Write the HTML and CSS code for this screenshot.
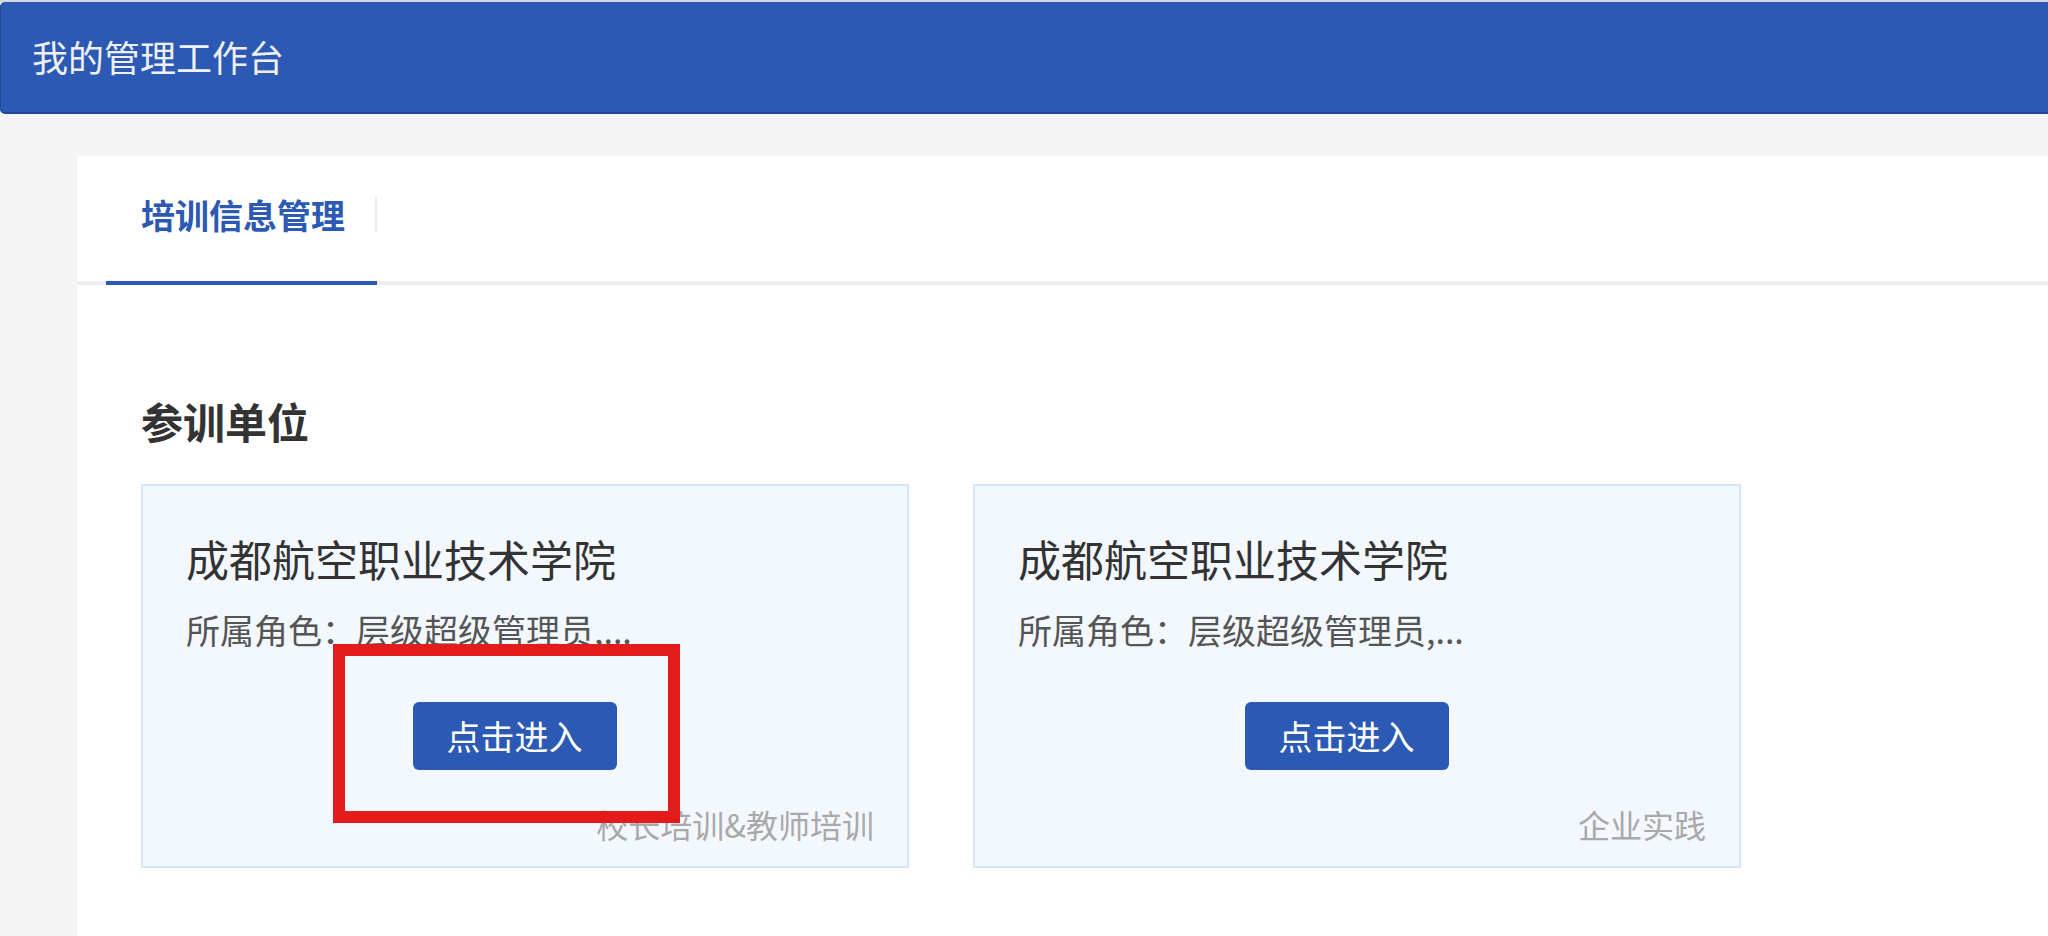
FILE: index.html
```html
<!DOCTYPE html>
<html lang="zh-CN">
<head>
<meta charset="utf-8">
<title>我的管理工作台</title>
<link rel="stylesheet" href="styles.css">
</head>
<body>
<div class="topline"></div>
<header class="header">
  <div class="header-title">我的管理工作台</div>
</header>
<main class="main">
  <section class="panel">
    <nav class="tabs">
      <div class="tab active">
        <span class="tab-label">培训信息管理</span>
        <span class="tab-sep"></span>
      </div>
    </nav>
    <div class="content">
      <h2 class="section-title">参训单位</h2>
      <div class="cards">
        <div class="card">
          <div class="card-title">成都航空职业技术学院</div>
          <div class="card-role">所属角色：层级超级管理员,...</div>
          <div class="card-action"><button class="btn-enter">点击进入</button></div>
          <div class="card-tag">校长培训&amp;教师培训</div>
          <div class="annotation"></div>
        </div>
        <div class="card">
          <div class="card-title">成都航空职业技术学院</div>
          <div class="card-role">所属角色：层级超级管理员,...</div>
          <div class="card-action"><button class="btn-enter">点击进入</button></div>
          <div class="card-tag">企业实践</div>
        </div>
      </div>
    </div>
  </section>
</main>
</body>
</html>
```

FILE: styles.css
```css
* {
  box-sizing: border-box;
}

html, body {
  margin: 0;
  padding: 0;
}

body {
  background: #f4f4f4;
  font-family: "Noto Sans CJK SC", "Noto Sans", "Liberation Sans", sans-serif;
  color: #333;
  min-height: 100vh;
}

.topline {
  height: 2px;
  background: #d3d8df;
}

.header {
  height: 112px;
  background: #2c59b3;
  border-bottom: 2px solid #22488f;
  border-left: 1px solid #22488f;
  border-radius: 5px 0 0 5px;
  display: flex;
  align-items: center;
  padding: 0 0 3px 31px;
}

.header-title {
  font-size: 36px;
  line-height: 50px;
  color: #eef0f4;
}

.main {
  padding: 42px 0 0 77px;
}

.panel {
  background: #fff;
  min-height: calc(100vh - 156px);
}

.tabs {
  display: flex;
  height: 129px;
  border-bottom: 4px solid #eeeeee;
  padding-left: 29px;
}

.tab {
  display: flex;
  align-items: center;
  height: 129px;
  padding: 0 0 8px 35px;
}

.tab.active {
  border-bottom: 4px solid #2c59b3;
}

.tab-label {
  font-size: 34px;
  font-weight: 700;
  line-height: 50px;
  color: #2c59b3;
  margin-right: 30px;
}

.tab-sep {
  width: 2px;
  height: 35px;
  background: #ececec;
}

.content {
  padding: 0 64px;
}

.section-title {
  margin: 106px 0 0;
  font-size: 42px;
  line-height: 60px;
  font-weight: 700;
  color: #333;
}

.cards {
  display: flex;
  gap: 64px;
  margin-top: 33px;
}

.card {
  position: relative;
  width: 768px;
  height: 384px;
  background: #f3f7fe;
  border: 2px solid #d6e4fb;
  padding: 42px 33px 22px 43px;
}

.card-title {
  font-size: 43px;
  line-height: 60px;
  color: #333;
}

.card-role {
  margin-top: 17px;
  font-size: 34px;
  line-height: 50px;
  color: #555;
  white-space: nowrap;
}

.card-action {
  margin-top: 47px;
  display: flex;
  justify-content: center;
  padding-right: 31px;
}

.btn-enter {
  width: 204px;
  height: 68px;
  border: none;
  border-radius: 6px;
  background: #2c59b3;
  color: #fff;
  font-family: inherit;
  font-size: 34px;
  line-height: 68px;
  padding: 0;
  cursor: pointer;
}

.card-tag {
  margin-top: 34px;
  font-size: 32px;
  line-height: 40px;
  color: #a9a9a9;
  text-align: right;
}

.annotation {
  position: absolute;
  left: 190px;
  top: 158px;
  width: 347px;
  height: 179px;
  border: 12px solid #e31b1b;
  pointer-events: none;
}
```
